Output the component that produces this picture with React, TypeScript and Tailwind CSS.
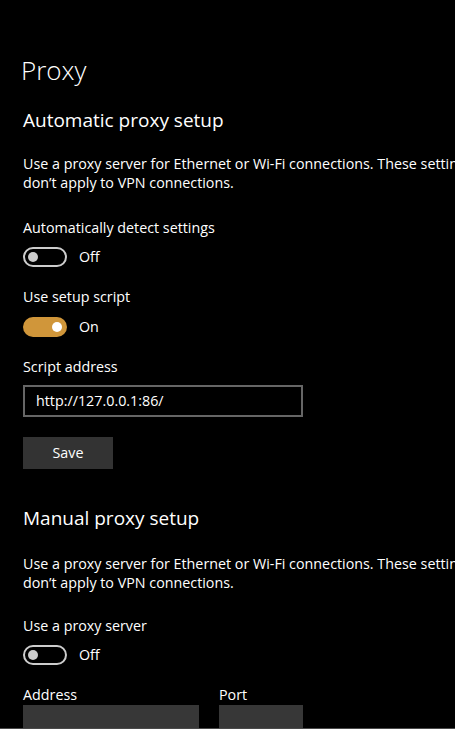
import React from "react";

const font = { fontFamily: "'Open Sans', 'Noto Sans', sans-serif" };

const Toggle = ({ on }: { on: boolean }) => (
  <div className="flex items-center h-5">
    {on ? (
      <div className="w-[44px] h-5 rounded-full bg-[#d0963a] flex items-center justify-end pr-[5px]">
        <div className="w-[10px] h-[10px] rounded-full bg-white" />
      </div>
    ) : (
      <div className="w-[44px] h-5 rounded-full border-2 border-[#cccccc] flex items-center pl-[3px]">
        <div className="w-[10px] h-[10px] rounded-full bg-[#cccccc]" />
      </div>
    )}
    <span className="ml-3 text-[14.3px] text-white">{on ? "On" : "Off"}</span>
  </div>
);

const Description = () => (
  <p className="text-[14.3px] leading-[19px] text-white whitespace-nowrap">
    Use a proxy server for Ethernet or Wi-Fi connections. These settings
    <br />
    don’t apply to VPN connections.
  </p>
);

export default function App() {
  return (
    <div
      className="w-[455px] h-[729px] overflow-hidden bg-black text-white pl-[23px] border-b border-[#4a4a4a]"
      style={font}
    >
      <h1 className="pt-[52px] text-[26px] leading-[36px] -ml-[2px] font-[350]">
        Proxy
      </h1>

      <h2 className="mt-[18px] text-[19px] leading-[28px]">
        Automatic proxy setup
      </h2>
      <div className="mt-[20px]">
        <Description />
      </div>

      <div className="mt-[26px] text-[14.3px] leading-[20px]">
        Automatically detect settings
      </div>
      <div className="mt-[9px]">
        <Toggle on={false} />
      </div>

      <div className="mt-[20px] text-[14.3px] leading-[20px]">Use setup script</div>
      <div className="mt-[10px]">
        <Toggle on />
      </div>

      <div className="mt-[20px] text-[14.3px] leading-[20px]">Script address</div>
      <div className="mt-[8px] w-[280px] h-[32px] border-2 border-[#666666] flex items-center px-[11px] text-[14.3px]">
        http://127.0.0.1:86/
      </div>
      <button className="mt-[20px] w-[90px] h-[32px] bg-[#333333] text-[14.3px] text-white">
        Save
      </button>

      <h2 className="mt-[35px] text-[19px] leading-[28px]">
        Manual proxy setup
      </h2>
      <div className="mt-[22px]">
        <Description />
      </div>

      <div className="mt-[24px] text-[14.3px] leading-[20px]">Use a proxy server</div>
      <div className="mt-[9px]">
        <Toggle on={false} />
      </div>

      <div className="mt-[20px] flex gap-[20px]">
        <div>
          <div className="text-[14.3px] leading-[20px]">Address</div>
          <div className="mt-0 w-[176px] h-[32px] bg-[#373737]" />
        </div>
        <div>
          <div className="text-[14.3px] leading-[20px]">Port</div>
          <div className="mt-0 w-[84px] h-[32px] bg-[#373737]" />
        </div>
      </div>
    </div>
  );
}
